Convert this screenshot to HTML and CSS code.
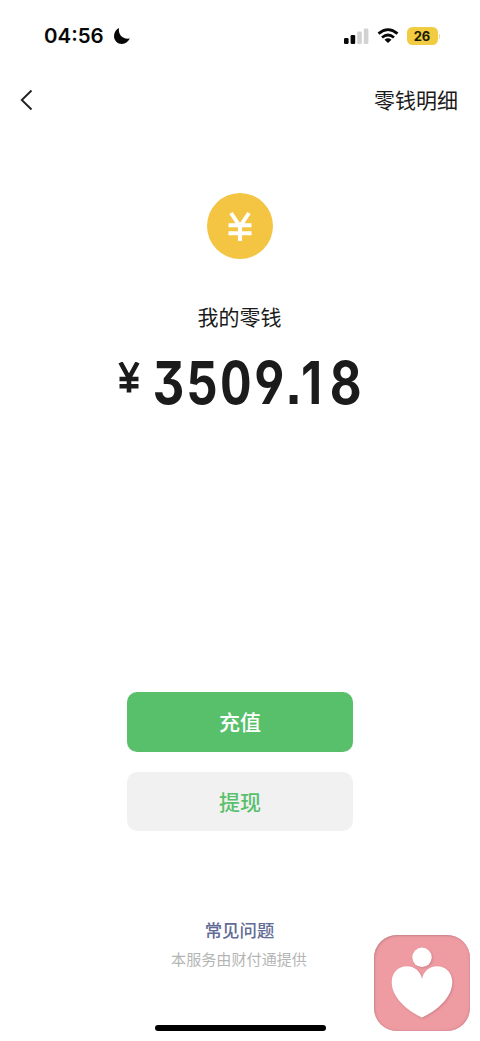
FILE: index.html
```html
<!DOCTYPE html>
<html lang="zh-CN">
<head>
<meta charset="utf-8">
<meta name="viewport" content="width=device-width, initial-scale=1">
<title>我的零钱</title>
<link rel="stylesheet" href="styles.css">
</head>
<body>
<div class="screen">
  <header class="status">
    <div class="status-left">
      <span class="time">04:56</span>
      <svg class="moon" width="18" height="18" viewBox="0 0 18 18"><path d="M6 1C5 7 9 12.600 16.800 11.600C15 15 12.300 17 9 17C4.500 17 1 13.500 1 9C1 5.500 3 2.300 6 1Z" fill="#080808"/></svg>
    </div>
    <div class="status-right">
      <svg width="25" height="17" viewBox="0 0 25 17"><rect x="0" y="10" width="4.600" height="6" rx="1.300" fill="#080808"/><rect x="6.600" y="7" width="4.600" height="9" rx="1.300" fill="#080808"/><rect x="13.200" y="3.500" width="4.600" height="12.500" rx="1.300" fill="#d2d2d2"/><rect x="19.800" y="0.500" width="4.600" height="15.500" rx="1.300" fill="#d2d2d2"/></svg>
      <svg class="wifi" width="22" height="16" viewBox="0 0 22 16" fill="none" stroke="#080808" stroke-width="2.700"><path d="M1.500 5.600Q11-2.300 20.500 5.600"/><path d="M5 9.500Q11 4.500 17 9.500"/><path d="M11 15L7.500 11.700Q11 9 14.500 11.700Z" fill="#080808" stroke="none"/></svg>
      <span class="battery">26</span><i class="battery-tip"></i>
    </div>
  </header>
  <nav class="nav">
    <svg width="14" height="22" viewBox="0 0 14 22"><path d="M12.500 1.500L2.800 11L12.500 20.500" fill="none" stroke="#222" stroke-width="1.900"/></svg>
    <span class="nav-link">零钱明细</span>
  </nav>
  <main class="balance">
    <svg class="coin" width="66" height="66" viewBox="0 0 66 66"><circle cx="33" cy="33" r="33" fill="#f4c542"/><path d="M24 20L33 33.500L42 20M33 33V48M21.500 32.200H44.500M21.500 40.200H44.500" fill="none" stroke="#fff" stroke-width="4"/></svg>
    <h1 class="title">我的零钱</h1>
    <div class="amount">
      <svg class="yen" width="22" height="31" viewBox="0 0 22 31"><path d="M2.500 .5L11 16L19.500 .5M11 15V30.500M1.500 17H20.500M1.500 24.300H20.500" fill="none" stroke="#1b1b1b" stroke-width="4.600"/></svg>
      <span class="digits">3509.<span class="cents">18</span></span>
    </div>
  </main>
  <div class="actions">
    <button class="btn primary">充值</button>
    <button class="btn secondary">提现</button>
  </div>
  <footer class="footer">
    <a class="faq">常见问题</a>
    <span class="provider">本服务由财付通提供</span>
    <div class="home-bar"></div>
  </footer>
  <div class="badge">
    <svg width="96" height="96" viewBox="0 0 96 96"><g fill="#fff"><circle cx="48" cy="22.300" r="9.700"/><path d="M48 44C46.500 36 40 31.300 33 31.300C24 31.300 17.700 38 17.700 47C17.700 62 32 75 48 82.500C64 75 78.300 62 78.300 47C78.300 38 72 31.300 63 31.300C56 31.300 49.500 36 48 44Z"/></g></svg>
  </div>
</div>
</body>
</html>
```
FILE: styles.css
```css
* { box-sizing: border-box; }
body { margin: 0; background: #fff; font-family: "Noto Sans CJK SC", sans-serif; color: #1b1b1b; }
.screen { position: relative; width: 480px; height: 1041px; overflow: hidden; display: flex; flex-direction: column; background: #fff; }
.status { height: 72px; padding: 0 40px 0 44px; display: flex; justify-content: space-between; align-items: center; }
.status-left, .status-right { display: flex; align-items: center; }
.time { font: 600 20.5px/24px Inter, sans-serif; color: #080808; }
.moon { margin-left: 9px; }
.wifi { margin: 0 8px; }
.battery { width: 31px; height: 18px; border-radius: 5.5px; background: #f1cb41; color: #201900; font: 700 13px/18px Inter, sans-serif; text-align: center; }
.battery-tip { width: 1.5px; height: 5px; margin-left: 1px; border-radius: 0 2px 2px 0; background: #f4d982; }
.nav { height: 56px; padding: 0 22px 0 19px; display: flex; justify-content: space-between; align-items: center; }
.nav-link { margin-top: -2px; font-size: 21px; line-height: 30px; }
.balance { display: flex; flex-direction: column; align-items: center; padding-top: 65px; }
.title { margin: 42px 1px 0 0; font-size: 21px; line-height: 30px; font-weight: 400; }
.amount { margin-top: 22px; display: flex; align-items: flex-start; gap: 13px; height: 60px; }
.yen { margin-top: 9px; }
.digits { width: 210px; font: 650 59px/60px Inter, sans-serif; font-feature-settings: "cv04", "cv09", "ss07", "tnum"; letter-spacing: 2.2px; white-space: nowrap; transform: scaleX(.83); transform-origin: left; }
.cents { margin-left: -1px; font-feature-settings: "cv04", "ss07"; letter-spacing: 9px; }
.actions { margin-top: 279px; display: flex; flex-direction: column; align-items: center; gap: 20px; }
.btn { width: 226px; height: 60px; padding: 0 0 2px; border: 0; border-radius: 10px; font: 500 21px/30px "Noto Sans CJK SC", sans-serif; }
.primary { background: #58c06b; color: #fff; }
.secondary { height: 59px; background: #f1f1f1; color: #58c06b; }
.footer { margin-top: 86px; display: flex; flex-direction: column; align-items: center; }
.faq { margin-right: 1px; font-size: 17.4px; line-height: 26px; font-weight: 500; color: #626b95; }
.provider { margin: 4px 2px 0 0; font-size: 15.1px; line-height: 22px; color: #b5b5b5; }
.home-bar { width: 171px; height: 6px; margin-top: 56px; border-radius: 3px; background: #000; }
.badge { position: absolute; left: 374px; top: 935px; width: 96px; height: 96px; border-radius: 23px; background: #ee9ba2; box-shadow: inset 1px 1px 2px #c8848b, inset -1px -1px 2px #dd9198; }
.badge svg { display: block; filter: drop-shadow(1px 1px 1px #cf828a); }
```
